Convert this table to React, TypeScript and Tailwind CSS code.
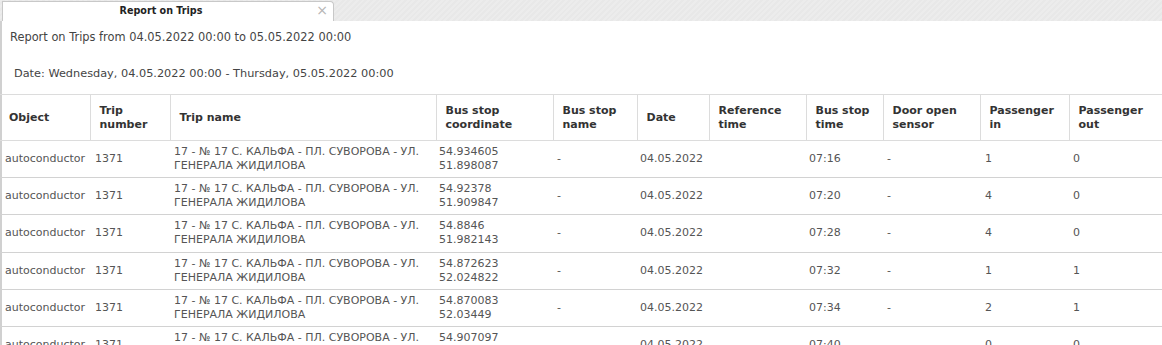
import React from "react";

type Row = {
  object: string;
  tripNo: string;
  tripName: string;
  coord: [string, string];
  stopName: string;
  date: string;
  refTime: string;
  stopTime: string;
  door: string;
  pIn: string;
  pOut: string;
};

const TRIP = "17 - № 17 С. КАЛЬФА - ПЛ. СУВОРОВА - УЛ. ГЕНЕРАЛА ЖИДИЛОВА";

const ROWS: Row[] = [
  ["54.934605", "51.898087", "07:16", "1", "0"],
  ["54.92378", "51.909847", "07:20", "4", "0"],
  ["54.8846", "51.982143", "07:28", "4", "0"],
  ["54.872623", "52.024822", "07:32", "1", "1"],
  ["54.870083", "52.03449", "07:34", "2", "1"],
  ["54.907097", "52.05126", "07:40", "0", "0"],
].map(([a, b, t, i, o]) => ({
  object: "autoconductor",
  tripNo: "1371",
  tripName: TRIP,
  coord: [a, b],
  stopName: "-",
  date: "04.05.2022",
  refTime: "",
  stopTime: t,
  door: "-",
  pIn: i,
  pOut: o,
}));

const HEADERS: { label: React.ReactNode; w: string }[] = [
  { label: "Object", w: "w-[90px]" },
  { label: <>Trip<br />number</>, w: "w-[80px]" },
  { label: "Trip name", w: "w-[266px]" },
  { label: <>Bus stop<br />coordinate</>, w: "w-[117px]" },
  { label: <>Bus stop<br />name</>, w: "w-[84px]" },
  { label: "Date", w: "w-[72px]" },
  { label: <>Reference<br />time</>, w: "w-[97px]" },
  { label: <>Bus stop<br />time</>, w: "w-[77px]" },
  { label: <>Door open<br />sensor</>, w: "w-[97px]" },
  { label: <>Passenger<br />in</>, w: "w-[89px]" },
  { label: <>Passenger<br />out</>, w: "w-[93px]" },
];

export default function App() {
  return (
    <div className="h-[345px] w-[1162px] overflow-hidden bg-white font-['DejaVu_Sans',sans-serif]">
      {/* tab strip */}
      <div className="flex h-[21px] items-end bg-[#ebebeb] bg-[repeating-linear-gradient(135deg,#ececec_0px,#ececec_2px,#e8e8e8_2px,#e8e8e8_4px)] pl-[2px]">
        <div className="relative flex h-[20px] w-[332px] items-center justify-center rounded-tr-[4px] border-l border-r border-t border-[#c8c8c8] bg-white">
          <span className="pr-[14px] text-[9.6px] font-bold text-[#222]">Report on Trips</span>
          <span className="absolute right-[5px] top-[1px] text-[14px] leading-[14px] text-[#b5b5b5]">×</span>
        </div>
      </div>

      <div className="h-[324px] border-l-2 border-[#d0d0d0] bg-white">
        <div className="pl-[8px] pt-[9px] text-[11.4px] leading-[14px] text-[#444]">
          Report on Trips from 04.05.2022 00:00 to 05.05.2022 00:00
        </div>
        <div className="pl-[12px] pt-[23px] text-[11.3px] leading-[14px] text-[#444]">
          Date: Wednesday, 04.05.2022 00:00 - Thursday, 05.05.2022 00:00
        </div>

        <table className="-ml-[2px] mt-[13px] w-[1160px] table-fixed border-collapse text-[11px] leading-[14px]">
          <thead>
            <tr className="h-[46px] border-t border-b border-[#dcdcdc]">
              {HEADERS.map((h, i) => (
                <th
                  key={i}
                  className={`${h.w} border-l border-[#dcdcdc] pl-[9px] text-left align-middle font-bold text-[#333] first:border-l-0`}
                >
                  {h.label}
                </th>
              ))}
            </tr>
          </thead>
          <tbody className="text-[#555]">
            {ROWS.map((r, i) => (
              <tr key={i} className="h-[37.2px] border-b border-[#d2d2d2]">
                <td className="pl-[5px] pr-[2px] align-middle whitespace-nowrap">{r.object}</td>
                <td className="pl-[5px] align-middle">{r.tripNo}</td>
                <td className="pl-[4px] pr-[4px] align-middle">{r.tripName}</td>
                <td className="pl-[3px] align-middle">
                  {r.coord[0]}
                  <br />
                  {r.coord[1]}
                </td>
                <td className="pl-[4px] align-middle">{r.stopName}</td>
                <td className="pl-[3px] align-middle">{r.date}</td>
                <td className="pl-[4px] align-middle">{r.refTime}</td>
                <td className="pl-[3px] align-middle">{r.stopTime}</td>
                <td className="pl-[4px] align-middle">{r.door}</td>
                <td className="pl-[5px] align-middle">{r.pIn}</td>
                <td className="pl-[4px] align-middle">{r.pOut}</td>
              </tr>
            ))}
          </tbody>
        </table>
      </div>
    </div>
  );
}
